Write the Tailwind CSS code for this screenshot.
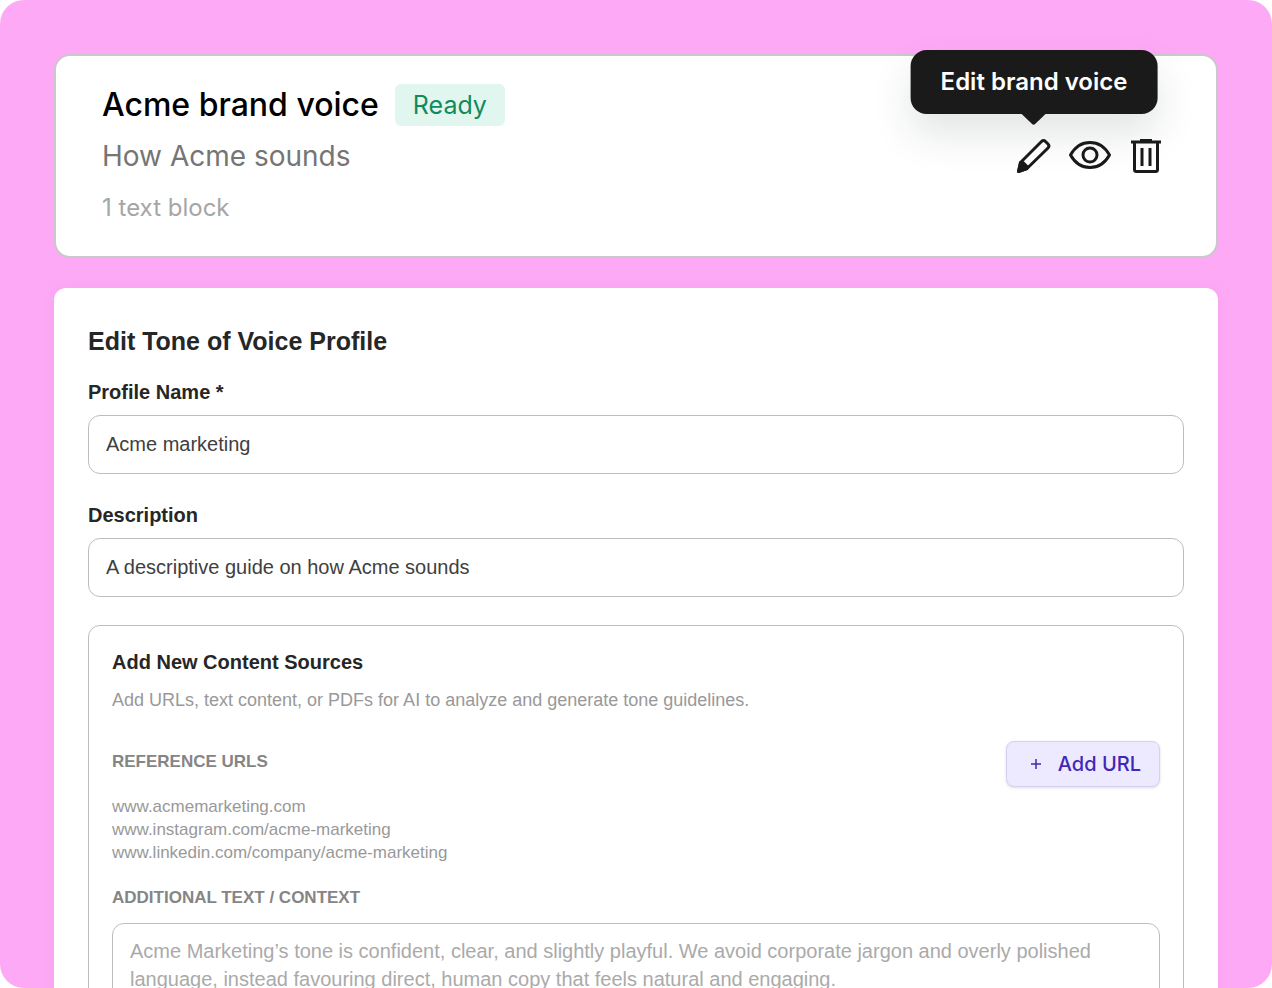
<!DOCTYPE html>
<html lang="en">
<head>
  <meta charset="UTF-8">
  <meta name="viewport" content="width=device-width, initial-scale=1">
  <title>Edit Tone of Voice Profile</title>
  <script src="https://cdn.jsdelivr.net/npm/@tailwindcss/browser@4"></script>
</head>
<body class="bg-white">
  <main class="h-screen overflow-hidden rounded-3xl bg-[#fea9f6] px-[54px] pt-[54px] font-['Liberation_Sans',Arial,sans-serif] text-[#262626]">

    <!-- Voice card -->
    <section class="flex items-start justify-between rounded-2xl border-2 border-[#c9c9c9] bg-white px-[46px] pt-7 pb-[26px] font-['Inter',sans-serif]">
      <div>
        <div class="flex items-center gap-4">
          <h1 class="text-[32px] leading-[42px] font-medium text-black">Acme brand voice</h1>
          <span class="rounded-md bg-[#e1f6ee] px-[18px] text-[25px] leading-[42px] text-[#128a5c]">Ready</span>
        </div>
        <p class="mt-2 text-[28px] leading-[44px] text-[#757575]">How Acme sounds</p>
        <p class="mt-2 text-2xl leading-[44px] text-[#a6a6a6]">1 text block</p>
      </div>

      <div class="mt-[52px] mr-2 flex items-center gap-[14px] text-[#1a1a1a]">
        <div class="relative">
          <button type="button" aria-label="Edit brand voice" class="block">
            <svg class="h-10 w-10" viewBox="0 0 40 40" fill="none" stroke="currentColor" stroke-width="3" stroke-linejoin="round">
              <path d="M4.500 35.500 6.500 26.500 27.500 5.500Q29.500 3.500 31.500 5.500L34 8Q36 10 34 12L13 32.500Z"/>
              <path d="M4.500 35.500 6.500 26.500 9 26.500 13 30.500V32.500Z" fill="currentColor"/>
            </svg>
          </button>
          <div role="tooltip" class="absolute bottom-[62px] left-1/2 -translate-x-1/2 rounded-2xl bg-[#1a1a1a] px-[30px] text-2xl leading-[64px] font-semibold whitespace-nowrap text-white shadow-[0_20px_40px_rgba(20,40,35,0.12)]">
            Edit brand voice
            <svg class="absolute top-full left-1/2 -mt-px h-3 w-7 -translate-x-1/2" viewBox="0 0 28 12" fill="#1a1a1a">
              <path d="M1 0H27L15.500 11Q14 12.500 12.500 11Z"/>
            </svg>
          </div>
        </div>
        <button type="button" aria-label="View brand voice">
          <svg class="h-10 w-12" viewBox="0 0 48 40" fill="none" stroke="currentColor" stroke-width="3" stroke-linejoin="round">
            <path d="M2.500 19C7 11 14 6.500 22 6.500S37 11 41.500 19C37 27 30 31.500 22 31.500S7 27 2.500 19Z"/>
            <circle cx="22" cy="19" r="7"/>
          </svg>
        </button>
        <button type="button" aria-label="Delete brand voice">
          <svg class="h-10 w-8" viewBox="0 0 32 40" fill="none" stroke="currentColor" stroke-width="3">
            <path d="M1 6H31M10 4.500H22"/>
            <path d="M4.500 6V33.500Q4.500 35.500 6.500 35.500H25.500Q27.500 35.500 27.500 33.500V6" stroke-linejoin="round"/>
            <path d="M12 12V30M20 12V30"/>
          </svg>
        </button>
      </div>
    </section>

    <!-- Profile form -->
    <form class="mt-[30px] rounded-xl bg-white px-[34px] pt-9 pb-9 shadow-[0_2px_16px_rgba(0,0,0,0.05)]">
      <h2 class="text-[25px] leading-[34px] font-bold">Edit Tone of Voice Profile</h2>

      <label for="profileName" class="mt-[22px] block text-xl leading-6 font-bold">Profile Name *</label>
      <input id="profileName" type="text" value="Acme marketing" class="mt-[11px] block h-[59px] w-full rounded-xl border border-[#bdbdbd] px-[17px] text-xl text-[#404040]">

      <label for="description" class="mt-[29px] block text-xl leading-6 font-bold">Description</label>
      <input id="description" type="text" value="A descriptive guide on how Acme sounds" class="mt-[11px] block h-[59px] w-full rounded-xl border border-[#bdbdbd] px-[17px] text-xl text-[#404040]">

      <section class="mt-7 rounded-xl border border-[#bdbdbd] px-[23px] pt-6 pb-6">
        <h3 class="text-xl leading-6 font-bold">Add New Content Sources</h3>
        <p class="mt-[14px] text-lg leading-6 text-[#999999]">Add URLs, text content, or PDFs for AI to analyze and generate tone guidelines.</p>

        <div class="mt-[29px] flex items-start justify-between">
          <h4 class="mt-[9px] text-[17px] leading-6 font-bold text-[#858585]">REFERENCE URLS</h4>
          <button type="button" class="flex h-[46px] items-center gap-4 rounded-lg border border-[#d6d0f5] bg-[#ede9fe] pr-[18px] pl-[23px] font-['Inter',sans-serif] text-xl font-medium text-[#4127b5] shadow-[0_1px_3px_rgba(0,0,0,0.14)]">
            <svg class="h-3 w-3" viewBox="0 0 12 12" stroke="currentColor" stroke-width="1.500"><path d="M1 6H11M6 1V11"/></svg>
            Add URL
          </button>
        </div>

        <ul class="mt-2 text-[17px] leading-[23px] text-[#999999]">
          <li><a href="#">www.acmemarketing.com</a></li>
          <li><a href="#">www.instagram.com/acme-marketing</a></li>
          <li><a href="#">www.linkedin.com/company/acme-marketing</a></li>
        </ul>

        <label for="context" class="mt-[22px] block text-[17px] leading-6 font-bold text-[#858585]">ADDITIONAL TEXT / CONTEXT</label>
        <textarea id="context" rows="4" class="mt-[13px] block w-full resize-none rounded-xl border border-[#bdbdbd] px-[17px] py-[13px] text-xl leading-7 text-[#aaaaaa]">Acme Marketing’s tone is confident, clear, and slightly playful. We avoid corporate jargon and overly polished language, instead favouring direct, human copy that feels natural and engaging.</textarea>
      </section>
    </form>
  </main>
</body>
</html>
